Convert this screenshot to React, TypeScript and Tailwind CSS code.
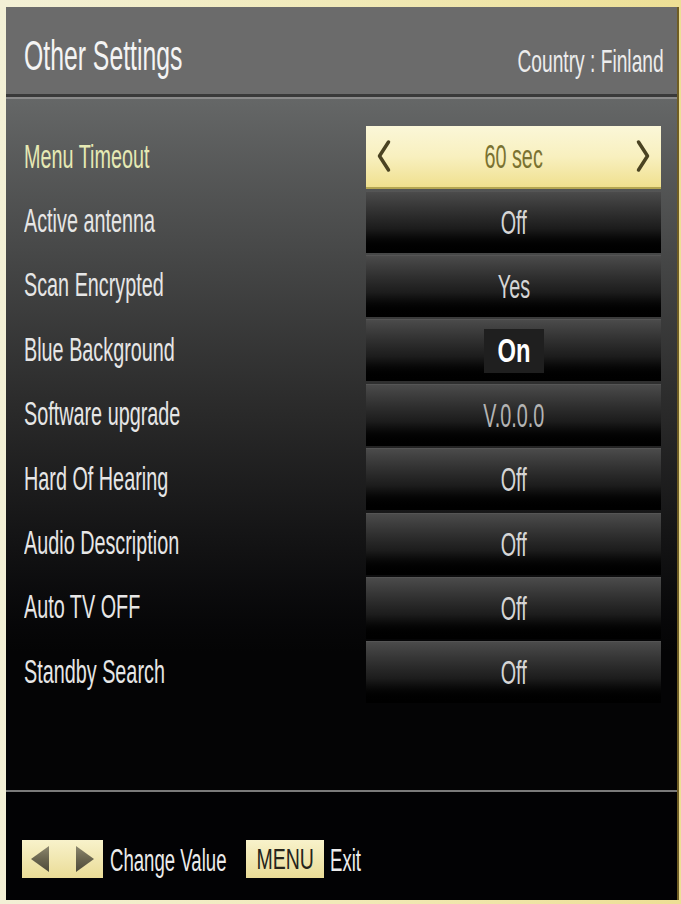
import React from "react";

type Row = { label: string; value: string; selected?: boolean; on?: boolean; dim?: boolean };

const rows: Row[] = [
  { label: "Menu Timeout", value: "60 sec", selected: true },
  { label: "Active antenna", value: "Off" },
  { label: "Scan Encrypted", value: "Yes" },
  { label: "Blue Background", value: "On", on: true },
  { label: "Software upgrade", value: "V.0.0.0", dim: true },
  { label: "Hard Of Hearing", value: "Off" },
  { label: "Audio Description", value: "Off" },
  { label: "Auto TV OFF", value: "Off" },
  { label: "Standby Search", value: "Off" },
];

function Chevron({ dir }: { dir: "l" | "r" }) {
  return (
    <svg width="16" height="34" viewBox="0 0 16 34" className="shrink-0">
      <path
        d={dir === "l" ? "M12.5 3 L3.5 17 L12.5 31" : "M3.5 3 L12.5 17 L3.5 31"}
        fill="none"
        stroke="#4a4322"
        strokeWidth="3.5"
        strokeLinecap="round"
        strokeLinejoin="round"
      />
    </svg>
  );
}

function Tri({ dir }: { dir: "l" | "r" }) {
  const id = dir === "l" ? "tgl" : "tgr";
  return (
    <svg width="22" height="28" viewBox="0 0 22 28">
      <defs>
        <linearGradient id={id} x1="0" y1="0" x2="0" y2="1">
          <stop offset="0" stopColor="#8c876e" />
          <stop offset="0.5" stopColor="#6a654f" />
          <stop offset="1" stopColor="#4e4a3a" />
        </linearGradient>
      </defs>
      <path d={dir === "l" ? "M20 1 L2 14 L20 27 Z" : "M2 1 L20 14 L2 27 Z"} fill={`url(#${id})`} />
    </svg>
  );
}

export default function App() {
  const font = { fontFamily: '"Liberation Sans", Arial, sans-serif' };
  return (
    <div
      className="w-[681px] h-[904px] bg-gradient-to-r from-[#f3f0d6] via-[#f1eab8] to-[#eddf95] pt-[7px] pl-[6px] pr-[2px] pb-[4px] overflow-hidden"
      style={font}
    >
      <div className="h-full flex flex-col bg-black border-r-2 border-[#6e5c24]">
        {/* Header */}
        <div className="h-[87px] shrink-0 bg-[#6b6b6b] flex items-center justify-between pl-[18px] pr-[13px] pt-[10px]">
          <span className="inline-block text-[42px] leading-none text-[#f4f4f4] scale-x-[0.59] origin-left whitespace-nowrap">
            Other Settings
          </span>
          <span className="inline-block text-[32px] leading-none text-[#ececec] scale-x-[0.6] origin-right whitespace-nowrap pt-[10px]">
            Country : Finland
          </span>
        </div>
        <div className="h-[3px] shrink-0 bg-[#393939]" />
        <div className="h-[2px] shrink-0 bg-[#8a8a8a]" />

        {/* Content */}
        <div className="flex-1 flex flex-col pt-[26px] bg-gradient-to-b from-[#656767] via-[#2a2a2a] via-45% to-[#040405] to-80%">
          {rows.map((r) => (
            <div key={r.label} className="h-[64.4px] flex items-center shrink-0">
              <div className="w-[360px] pl-[18px] shrink-0">
                <span
                  className={`inline-block text-[33px] leading-none scale-x-[0.6] origin-left whitespace-nowrap ${
                    r.selected ? "text-[#e6e9b4]" : "text-[#e6e6e6]"
                  }`}
                >
                  {r.label}
                </span>
              </div>
              {r.selected ? (
                <div className="w-[295px] h-[63px] flex items-center justify-between px-[10px] bg-gradient-to-b from-[#fbf7d8] via-[#f8f0bf] to-[#f0e08e] border-b-2 border-[#b3a552]">
                  <Chevron dir="l" />
                  <span className="inline-block text-[33px] leading-none text-[#7a7231] scale-x-[0.6] whitespace-nowrap">
                    {r.value}
                  </span>
                  <Chevron dir="r" />
                </div>
              ) : (
                <div className="w-[295px] h-[62px] flex items-center justify-center bg-gradient-to-b from-[#4b4b4b] via-[#1c1c1c] via-60% to-[#000000] border-t border-[#555555]">
                  {r.on ? (
                    <div className="w-[60px] h-[44px] bg-[#1f1f1f] flex items-center justify-center">
                      <span className="inline-block text-[33px] font-bold leading-none text-white scale-x-[0.72] whitespace-nowrap">
                        {r.value}
                      </span>
                    </div>
                  ) : (
                    <span
                      className={`inline-block text-[33px] leading-none scale-x-[0.6] whitespace-nowrap ${
                        r.dim ? "text-[#b4b4b4]" : "text-[#d6d6d6]"
                      }`}
                    >
                      {r.value}
                    </span>
                  )}
                </div>
              )}
            </div>
          ))}
        </div>

        {/* Separator */}
        <div className="h-[2px] shrink-0 bg-[#7a7a7a]" />

        {/* Footer */}
        <div className="h-[108px] shrink-0 bg-[#020204] flex items-start pt-[48px] pl-[16px]">
          <div className="w-[81px] h-[38px] flex items-center justify-between px-[7px] bg-gradient-to-b from-[#f8f2cb] to-[#eadc96]">
            <Tri dir="l" />
            <Tri dir="r" />
          </div>
          <div className="w-[143px] h-[38px] flex items-end pl-[7px]">
            <span className="inline-block text-[31px] leading-none text-[#ececec] scale-x-[0.6] origin-left whitespace-nowrap pb-[2px]">
              Change Value
            </span>
          </div>
          <div className="w-[78px] h-[38px] flex items-center justify-center bg-gradient-to-b from-[#f8f2cb] to-[#eadc96]">
            <span className="inline-block text-[30px] leading-none text-[#26241a] scale-x-[0.65] whitespace-nowrap">
              MENU
            </span>
          </div>
          <div className="h-[38px] flex items-end pl-[6px]">
            <span className="inline-block text-[31px] leading-none text-[#ececec] scale-x-[0.6] origin-left whitespace-nowrap pb-[2px]">
              Exit
            </span>
          </div>
        </div>
      </div>
    </div>
  );
}
